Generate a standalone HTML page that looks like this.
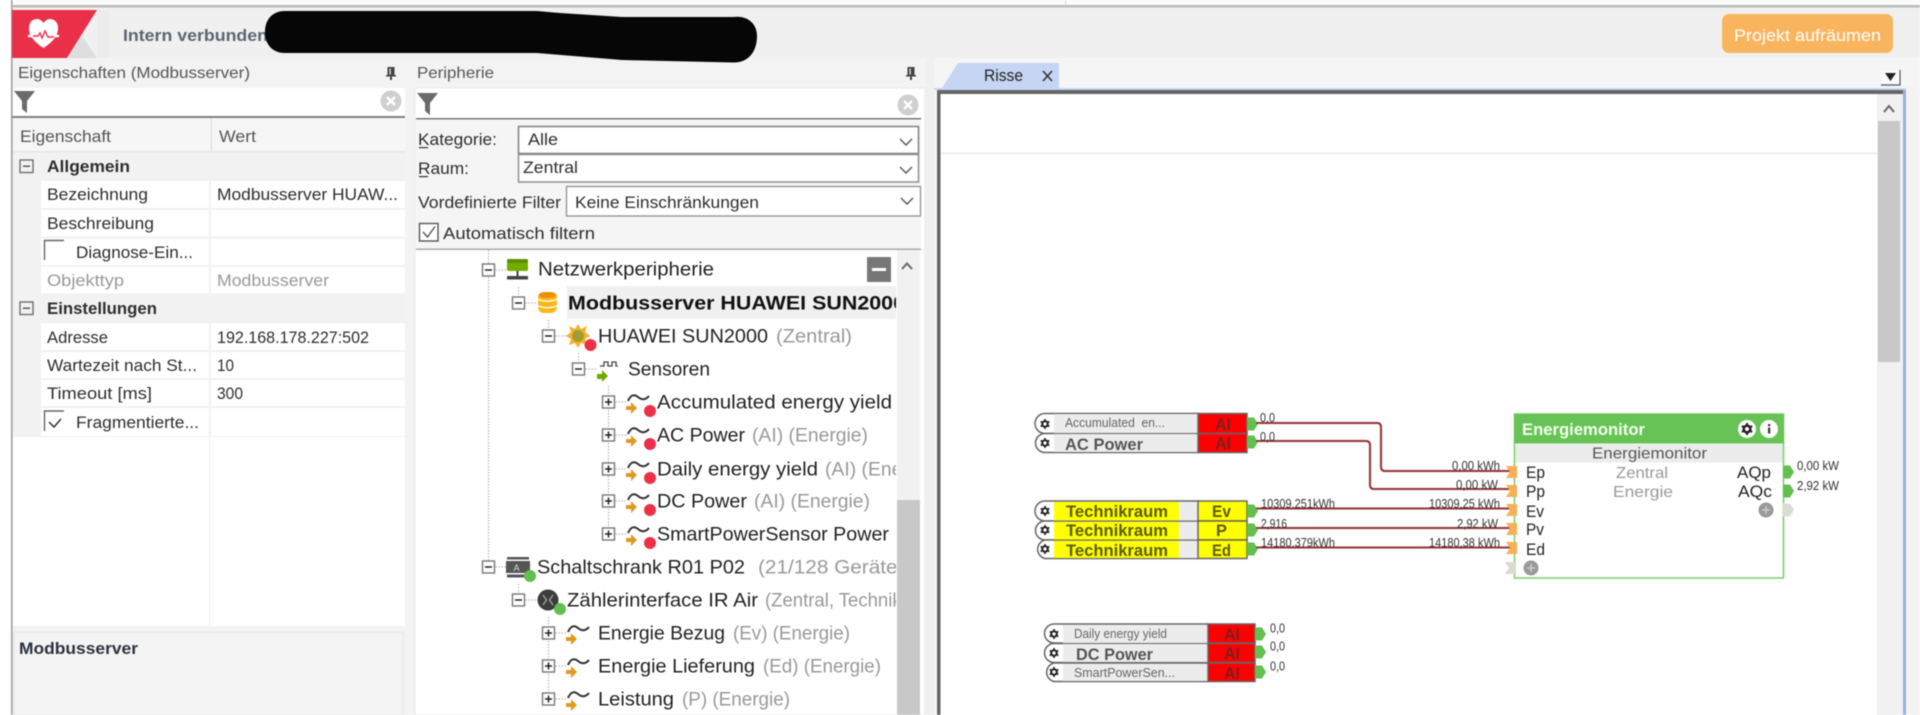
<!DOCTYPE html>
<html lang="de"><head><meta charset="utf-8"><title>Loxone Config</title>
<style>
html,body{margin:0;padding:0;background:#fff;width:1920px;height:715px;overflow:hidden}
svg{display:block;filter:blur(.45px)}
text{font-family:"Liberation Sans",sans-serif;white-space:pre}
.s{font-size:17px;fill:#2e2e2e}
.b{font-size:17px;fill:#2e2e2e;font-weight:700}
.h{font-size:16px;fill:#555}
.g{font-size:17px;fill:#999}
.t{font-size:19.5px;fill:#222}
.tg{font-size:19.5px;fill:#999}
.c{font-size:12.5px;fill:#333}
.n{font-size:12.5px;fill:#666}
.nb{font-size:17px;fill:#555;font-weight:700}
.y{font-size:17px;fill:#5c5c00;font-weight:700}
.ai{font-size:17px;fill:#7a2020;font-weight:700}
.io{font-size:17px;fill:#222}
.gc{font-size:16px;fill:#999}
</style></head><body>
<svg xmlns="http://www.w3.org/2000/svg" width="1920" height="715" viewBox="0 0 1920 715">
<defs>
<clipPath id="tc"><rect x="416" y="250" width="480" height="465"/></clipPath>
<g id="exm"><rect x="-6" y="-6" width="12" height="12" fill="#fff" stroke="#777" stroke-width="1.4"/><path d="M-3.5 0H3.5" stroke="#222" stroke-width="1.5"/><path d="M7 0H18" stroke="#aaa" stroke-dasharray="1.5 1.5"/></g>
<g id="exp"><rect x="-6" y="-6" width="12" height="12" fill="#fff" stroke="#777" stroke-width="1.4"/><path d="M-3.5 0H3.5M0 -3.5V3.5" stroke="#222" stroke-width="1.5"/><path d="M7 0H18" stroke="#aaa" stroke-dasharray="1.5 1.5"/></g>
<g id="sen"><path d="M2 -1Q6 -10 12 -5T23 -6" fill="none" stroke="#333" stroke-width="2"/><path d="M0 4H5V0L11 6L5 12V8H0Z" fill="#e09a20"/></g>
<g id="gear"><circle r="9" fill="#fff"/><circle r="4.6" fill="#222"/><circle r="2" fill="#fff"/><path d="M0 -6V6M-5.2 -3L5.2 3M-5.2 3L5.2 -3" stroke="#222" stroke-width="2"/><circle r="2" fill="#fff"/></g>
<g id="gs"><circle r="6" fill="#fff"/><circle r="3.8" fill="#222"/><path d="M0 -5V5M-4.3 -2.5L4.3 2.5M-4.3 2.5L4.3 -2.5" stroke="#222" stroke-width="1.6"/><circle r="1.7" fill="#fff"/></g>
<path id="po" d="M0 -6.500H7L11 0L7 6.500H0Z" fill="#62bf50"/>
<path id="pi" d="M-10 -6H1V6H-10L-6 0Z" fill="#f8b057"/>
<path id="ch" d="M-6 -3L0 3L6 -3" fill="none" stroke="#555" stroke-width="1.4"/>
<path id="fun" d="M0 0H21L13 10V22L8 18V10Z" fill="#6b6b6b"/>
<path id="pin" d="M-3.5 -6H3.5V2H5V3.5H1V7H-1V3.5H-5V2H-3.5Z M-1.5 -4.5V1.5H-.3V-4.5Z" fill="#444" fill-rule="evenodd"/>
</defs>

<rect width="1920" height="715" fill="#f3f3f3"/>
<!-- top -->
<rect x="0" y="0" width="12" height="715" fill="#fff"/>
<rect x="11" y="0" width="1.6" height="715" fill="#a0a0a0"/>
<rect x="13" y="0" width="1907" height="5" fill="#fbfbfb"/>
<rect x="13" y="5" width="1907" height="2.5" fill="#b9b9b9"/>
<rect x="13" y="8" width="1907" height="50" fill="#f0f0f0"/>
<rect x="1065" y="0" width="1" height="5" fill="#ddd"/>
<!-- logo -->
<rect x="97" y="10" width="12" height="48" fill="#ececec"/>
<path d="M12 10H97L67 58H12Z" fill="#ea3049"/>
<path d="M82 36L97 58H67Z" fill="#dedede"/>
<path d="M43.500 48C36 43 29 37 29 28C29 22 33 19 37 19C40 19 42 21 43.500 23C45 21 47 19 50 19C54 19 58 22 58 28C58 37 51 43 43.500 48Z" fill="#fff"/>
<path d="M28 36H36L39 34L42 39L45 31L48 37L50 36H59" fill="none" stroke="#fff" stroke-width="2.6"/>
<path d="M33 36H38L40 33L42 38L45 31L48 37H54" fill="none" stroke="#ea3049" stroke-width="1.4"/>
<text x="123" y="41" style="font-size:17px;font-weight:700;fill:#5d6570" textLength="145" lengthAdjust="spacingAndGlyphs">Intern verbunden</text>
<path d="M285 11H537L560 13L622 17H733C748 15 757 24 757 36C757 52 748 63 733 62.500L622 60L537 53H285C272 53 265 44 265 32C265 20 272 11 285 11Z" fill="#060606"/>
<rect x="1722" y="14" width="171" height="39" rx="7" fill="#f9b55e"/>
<text x="1734" y="41" style="font-size:17px;fill:#fff" textLength="147" lengthAdjust="spacingAndGlyphs">Projekt aufräumen</text>

<!-- panel 1 -->
<text x="18" y="78" class="h" textLength="232" lengthAdjust="spacingAndGlyphs">Eigenschaften (Modbusserver)</text>
<use href="#pin" x="391" y="73"/>
<rect x="13" y="88" width="392" height="28.500" fill="#fff"/>
<use href="#fun" x="14" y="91"/>
<circle cx="391" cy="101" r="10.500" fill="#cfcfcf"/><path d="M387 97L395 105M395 97L387 105" stroke="#fff" stroke-width="2.500"/>
<rect x="12" y="116" width="393" height="2" fill="#7f7f7f"/>
<rect x="13" y="118" width="392" height="34" fill="#f6f6f6"/>
<rect x="210.500" y="118" width="1.500" height="34" fill="#e2e2e2"/>
<rect x="13" y="151" width="392" height="1.500" fill="#e6e6e6"/>
<text x="20" y="142" class="h" style="font-size:17px" textLength="91" lengthAdjust="spacingAndGlyphs">Eigenschaft</text>
<text x="219" y="142" class="h" style="font-size:17px" textLength="37" lengthAdjust="spacingAndGlyphs">Wert</text>
<rect x="13" y="152.500" width="392" height="285" fill="#f2f2f2"/>
<!-- rows -->
<g fill="#fff">
<rect x="41" y="181" width="168" height="27"/><rect x="211" y="181" width="194" height="27"/>
<rect x="41" y="210" width="168" height="26.500"/><rect x="211" y="210" width="194" height="26.500"/>
<rect x="41" y="238.500" width="168" height="26.500"/><rect x="211" y="238.500" width="194" height="26.500"/>
<rect x="41" y="267" width="168" height="26.500"/><rect x="211" y="267" width="194" height="26.500"/>
<rect x="41" y="323" width="168" height="27"/><rect x="211" y="323" width="194" height="27"/>
<rect x="41" y="352" width="168" height="26"/><rect x="211" y="352" width="194" height="26"/>
<rect x="41" y="380" width="168" height="26"/><rect x="211" y="380" width="194" height="26"/>
<rect x="41" y="408" width="168" height="28"/><rect x="211" y="408" width="194" height="28"/>
<rect x="13" y="437" width="392" height="189"/>
</g>
<rect x="209" y="437" width="1" height="189" fill="#f0f0f0"/>
<rect x="20" y="160" width="13" height="12.500" fill="none" stroke="#666" stroke-width="1.300"/><path d="M23 166.200H30" stroke="#444" stroke-width="1.300"/>
<rect x="20" y="302" width="13" height="12.500" fill="none" stroke="#666" stroke-width="1.300"/><path d="M23 308.200H30" stroke="#444" stroke-width="1.300"/>
<text x="47" y="172" class="b" textLength="83" lengthAdjust="spacingAndGlyphs">Allgemein</text>
<text x="47" y="314" class="b" textLength="110" lengthAdjust="spacingAndGlyphs">Einstellungen</text>
<text x="47" y="200" class="s" textLength="101" lengthAdjust="spacingAndGlyphs">Bezeichnung</text>
<text x="217" y="200" class="s" textLength="181" lengthAdjust="spacingAndGlyphs">Modbusserver HUAW...</text>
<text x="47" y="229" class="s" textLength="107" lengthAdjust="spacingAndGlyphs">Beschreibung</text>
<path d="M44.500 260V240.500H64" fill="none" stroke="#666" stroke-width="1.400"/>
<text x="76" y="258" class="s" textLength="117" lengthAdjust="spacingAndGlyphs">Diagnose-Ein...</text>
<text x="47" y="286" class="g" textLength="77" lengthAdjust="spacingAndGlyphs">Objekttyp</text>
<text x="217" y="286" class="g" textLength="112" lengthAdjust="spacingAndGlyphs">Modbusserver</text>
<text x="47" y="343" class="s" textLength="61" lengthAdjust="spacingAndGlyphs">Adresse</text>
<text x="217" y="343" class="s" textLength="152" lengthAdjust="spacingAndGlyphs">192.168.178.227:502</text>
<text x="47" y="371" class="s" textLength="150" lengthAdjust="spacingAndGlyphs">Wartezeit nach St...</text>
<text x="217" y="371" class="s" textLength="17" lengthAdjust="spacingAndGlyphs">10</text>
<text x="47" y="399" class="s" textLength="105" lengthAdjust="spacingAndGlyphs">Timeout [ms]</text>
<text x="217" y="399" class="s" textLength="26" lengthAdjust="spacingAndGlyphs">300</text>
<path d="M44.500 431V411H64" fill="none" stroke="#666" stroke-width="1.400"/>
<path d="M49 422L54 427L61 419" fill="none" stroke="#333" stroke-width="1.500"/>
<text x="76" y="428" class="s" textLength="123" lengthAdjust="spacingAndGlyphs">Fragmentierte...</text>
<rect x="14" y="632" width="389" height="83" fill="#f4f4f4" stroke="#e8e8e8" stroke-width="1.500"/>
<text x="19" y="654" class="b" style="fill:#2b3340" textLength="119" lengthAdjust="spacingAndGlyphs">Modbusserver</text>

<!-- panel 2 -->
<text x="417" y="78" class="h" textLength="77" lengthAdjust="spacingAndGlyphs">Peripherie</text>
<use href="#pin" x="911" y="73"/>
<rect x="415" y="88" width="510" height="627" fill="#fff" stroke="#e9e9e9"/>
<use href="#fun" x="417" y="93"/>
<circle cx="908" cy="105" r="10.500" fill="#cfcfcf"/><path d="M904 101L912 109M912 101L904 109" stroke="#fff" stroke-width="2.500"/>
<rect x="416" y="118" width="505" height="1.500" fill="#777"/>
<rect x="416" y="120" width="505" height="129" fill="#f5f5f5"/>
<text x="418" y="145" class="s" textLength="79" lengthAdjust="spacingAndGlyphs">Kategorie:</text><rect x="419" y="147" width="9" height="1.200" fill="#333"/>
<text x="418" y="174" class="s" textLength="51" lengthAdjust="spacingAndGlyphs">Raum:</text><rect x="419" y="176" width="9" height="1.200" fill="#333"/>
<rect x="518.500" y="126.500" width="400" height="27" fill="#fff" stroke="#808080" stroke-width="1.500"/>
<rect x="518.500" y="154.500" width="400" height="27.500" fill="#fff" stroke="#909090" stroke-width="1.500"/>
<text x="528" y="145" class="s" textLength="30" lengthAdjust="spacingAndGlyphs">Alle</text>
<text x="523" y="173" class="s" textLength="55" lengthAdjust="spacingAndGlyphs">Zentral</text>
<use href="#ch" x="906" y="142"/><use href="#ch" x="906" y="170"/>
<text x="418" y="208" class="s" textLength="143" lengthAdjust="spacingAndGlyphs">Vordefinierte Filter</text>
<rect x="566.500" y="186.500" width="354" height="29.500" fill="#fff" stroke="#909090" stroke-width="1.300"/>
<text x="575" y="208" class="s" textLength="184" lengthAdjust="spacingAndGlyphs">Keine Einschränkungen</text>
<use href="#ch" x="907" y="201"/>
<rect x="419.500" y="223.500" width="18.500" height="17.500" fill="#fff" stroke="#555" stroke-width="1.400"/>
<path d="M423 232L427.500 237L435 226.500" fill="none" stroke="#555" stroke-width="1.400"/>
<text x="443" y="239" class="s" textLength="152" lengthAdjust="spacingAndGlyphs">Automatisch filtern</text>
<rect x="416" y="248.500" width="505" height="1.500" fill="#aaa"/>

<!-- tree -->
<rect x="897" y="250" width="23" height="465" fill="#f1f1f1"/>
<rect x="897" y="500" width="23" height="215" fill="#c8c8c8"/>
<path d="M902 269L907 263.500L912 269" fill="none" stroke="#666" stroke-width="2"/>
<rect x="867" y="257" width="24" height="25" rx="1" fill="#777"/><rect x="872" y="268" width="14" height="3" fill="#fff"/>
<rect x="567" y="286" width="329" height="33" fill="#f0f0f0"/>
<g stroke="#aaa" stroke-dasharray="1.500 1.500" fill="none">
<path d="M488.500 250V562"/><path d="M518.500 287V298"/><path d="M548.500 320V331"/><path d="M578.500 353V364"/>
<path d="M608.500 386V530"/><path d="M518.500 584V595"/><path d="M548.500 617V695"/>
</g>
<use href="#exm" x="488.500" y="270"/>
<rect x="507" y="259" width="21" height="12" rx="2" fill="#74ac00"/><rect x="507" y="259" width="21" height="4" rx="1.500" fill="#5f8f00"/><path d="M517.500 271V276" stroke="#444" stroke-width="2"/><rect x="507" y="276" width="21" height="3.500" fill="#444"/>
<text x="538" y="275.500" class="t" textLength="176" lengthAdjust="spacingAndGlyphs">Netzwerkperipherie</text>
<use href="#exm" x="518.500" y="303"/>
<rect x="538" y="292" width="19" height="21" rx="6" fill="#f9b818"/><path d="M538 299.500Q547.500 303 557 299.500M538 306Q547.500 309.500 557 306" stroke="#fff" fill="none" stroke-width="1.200"/><ellipse cx="547.500" cy="295" rx="9" ry="3" fill="#ef8d00"/>
<text clip-path="url(#tc)" x="568" y="309.500" class="t" style="font-weight:700;fill:#111" textLength="337" lengthAdjust="spacingAndGlyphs">Modbusserver HUAWEI SUN2000</text>
<use href="#exm" x="548.500" y="336"/>
<path d="M578 324L581 329L587 326L585 332L590 336L585 339L587 345L581 343L578 348L575 343L569 345L571 339L566 336L571 332L569 326L575 329Z" fill="#f9b030"/><circle cx="578" cy="336" r="6" fill="#8a9a30" opacity=".8"/>
<circle cx="590.500" cy="345" r="6" fill="#ec3048"/>
<text x="598" y="342.500" class="t" textLength="170" lengthAdjust="spacingAndGlyphs">HUAWEI SUN2000</text>
<text x="776" y="342.500" class="tg" textLength="76" lengthAdjust="spacingAndGlyphs">(Zentral)</text>
<use href="#exm" x="578.500" y="369"/>
<path d="M600 366H604V362H608V366H612V362H616V366H618" fill="none" stroke="#444" stroke-width="1.300"/><path d="M597 374H602V370L608 376L602 382V379H597Z" fill="#6fa800"/>
<text x="628" y="375.500" class="t" textLength="82" lengthAdjust="spacingAndGlyphs">Sensoren</text>

<use href="#exp" x="608.500" y="402"/><use href="#sen" x="626" y="402"/><circle cx="650" cy="411" r="6" fill="#ec3048"/>
<text clip-path="url(#tc)" x="657" y="408.500" class="t" textLength="235" lengthAdjust="spacingAndGlyphs">Accumulated energy yield</text>
<use href="#exp" x="608.500" y="435"/><use href="#sen" x="626" y="435"/><circle cx="650" cy="444" r="6" fill="#ec3048"/>
<text x="657" y="441.500" class="t" textLength="88" lengthAdjust="spacingAndGlyphs">AC Power</text><text x="752" y="441.500" class="tg" textLength="116" lengthAdjust="spacingAndGlyphs">(AI) (Energie)</text>
<use href="#exp" x="608.500" y="469"/><use href="#sen" x="626" y="469"/><circle cx="650" cy="478" r="6" fill="#ec3048"/>
<text x="657" y="475.500" class="t" textLength="161" lengthAdjust="spacingAndGlyphs">Daily energy yield</text><text clip-path="url(#tc)" x="825" y="475.500" class="tg" textLength="116" lengthAdjust="spacingAndGlyphs">(AI) (Energie)</text>
<use href="#exp" x="608.500" y="501"/><use href="#sen" x="626" y="501"/><circle cx="650" cy="510" r="6" fill="#ec3048"/>
<text x="657" y="507.500" class="t" textLength="90" lengthAdjust="spacingAndGlyphs">DC Power</text><text x="754" y="507.500" class="tg" textLength="116" lengthAdjust="spacingAndGlyphs">(AI) (Energie)</text>
<use href="#exp" x="608.500" y="534"/><use href="#sen" x="626" y="534"/><circle cx="650" cy="543" r="6" fill="#ec3048"/>
<text x="657" y="540.500" class="t" textLength="232" lengthAdjust="spacingAndGlyphs">SmartPowerSensor Power</text>

<use href="#exm" x="488.500" y="567"/>
<rect x="507" y="557" width="22" height="2.500" fill="#555"/><rect x="506" y="561" width="24" height="12" fill="#555"/><rect x="507" y="574.500" width="22" height="3" fill="#555"/><text x="513.500" y="571" style="font-size:9px;fill:#ddd">A</text>
<circle cx="530" cy="576" r="6" fill="#62bf50"/>
<text x="537" y="573.500" class="t" textLength="208" lengthAdjust="spacingAndGlyphs">Schaltschrank R01 P02</text>
<text clip-path="url(#tc)" x="758" y="573.500" class="tg" textLength="158" lengthAdjust="spacingAndGlyphs">(21/128 Geräten)</text>
<use href="#exm" x="518.500" y="600"/>
<circle cx="548" cy="600" r="10.500" fill="#3c3c3c"/><path d="M543 595L546.500 600L543 605M553 595L549.500 600L553 605" fill="none" stroke="#aaa" stroke-width="1.200"/>
<circle cx="560" cy="609" r="6" fill="#62bf50"/>
<text x="567" y="606.500" class="t" textLength="191" lengthAdjust="spacingAndGlyphs">Zählerinterface IR Air</text>
<text clip-path="url(#tc)" x="765" y="606.500" class="tg" textLength="185" lengthAdjust="spacingAndGlyphs">(Zentral, Technikraum)</text>
<use href="#exp" x="548.500" y="633"/><use href="#sen" x="566" y="633"/>
<text x="598" y="639.500" class="t" textLength="127" lengthAdjust="spacingAndGlyphs">Energie Bezug</text><text x="733" y="639.500" class="tg" textLength="117" lengthAdjust="spacingAndGlyphs">(Ev) (Energie)</text>
<use href="#exp" x="548.500" y="666"/><use href="#sen" x="566" y="666"/>
<text x="598" y="672.500" class="t" textLength="157" lengthAdjust="spacingAndGlyphs">Energie Lieferung</text><text x="763" y="672.500" class="tg" textLength="118" lengthAdjust="spacingAndGlyphs">(Ed) (Energie)</text>
<use href="#exp" x="548.500" y="699"/><use href="#sen" x="566" y="699"/>
<text x="598" y="705.500" class="t" textLength="76" lengthAdjust="spacingAndGlyphs">Leistung</text><text x="682" y="705.500" class="tg" textLength="108" lengthAdjust="spacingAndGlyphs">(P) (Energie)</text>

<!-- right pane -->
<rect x="926" y="58" width="8" height="657" fill="#f0f0f0"/>
<rect x="934" y="58" width="986" height="30" fill="#f5f5f5"/>
<path d="M942 88L958 63H1059V88Z" fill="#c6d5f3"/>
<text x="984" y="81" style="font-size:16.500px;fill:#222" textLength="39" lengthAdjust="spacingAndGlyphs">Risse</text>
<path d="M1043 71L1052 81M1052 71L1043 81" stroke="#333" stroke-width="1.600"/>
<rect x="1881" y="70" width="19" height="15" fill="#fafafa"/><path d="M1881 85H1900V70" fill="none" stroke="#555" stroke-width="1.200"/><path d="M1885 73H1896L1890.500 81Z" fill="#222"/>
<rect x="934" y="88" width="972" height="2" fill="#c6d5f3"/>
<rect x="936" y="90" width="970" height="625" fill="#fff"/>
<rect x="937" y="90" width="966" height="4" fill="#666"/>
<rect x="937" y="90" width="3.500" height="625" fill="#666"/>
<rect x="1903" y="90" width="3" height="625" fill="#9db0d8"/>
<rect x="941" y="152.500" width="936" height="1.500" fill="#e8e8e8"/>
<rect x="1877" y="94" width="26" height="621" fill="#f1f1f1"/>
<rect x="1878" y="121" width="22" height="241" fill="#c8c8c8"/>
<path d="M1884 112L1889 106L1894 112" fill="none" stroke="#666" stroke-width="2"/>

<!-- block 1 -->
<g>
<path d="M1198 413.500H1045A10 10 0 0 0 1045 433.500H1198Z" fill="#fff" stroke="#666" stroke-width="1.500"/>
<path d="M1198 433.500H1045A9.500 9.500 0 0 0 1045 452.500H1198Z" fill="#fff" stroke="#666" stroke-width="1.500"/>
<rect x="1054" y="414" width="144" height="19" fill="#ececec"/><rect x="1054" y="434" width="144" height="18" fill="#ececec"/>
<rect x="1198" y="413.500" width="49" height="20" fill="#f00" stroke="#666" stroke-width="1.500"/>
<rect x="1198" y="433.500" width="49" height="19" fill="#f00" stroke="#666" stroke-width="1.500"/>
<use href="#gs" x="1045" y="424"/><use href="#gs" x="1045" y="443"/>
<text x="1065" y="427" class="n" textLength="100" lengthAdjust="spacingAndGlyphs">Accumulated  en...</text>
<text x="1065" y="450" class="nb" textLength="78" lengthAdjust="spacingAndGlyphs">AC Power</text>
<text x="1215" y="430" class="ai" textLength="16" lengthAdjust="spacingAndGlyphs">AI</text>
<text x="1215" y="449" class="ai" textLength="16" lengthAdjust="spacingAndGlyphs">AI</text>
<use href="#po" x="1247" y="424"/><use href="#po" x="1247" y="442"/>
</g>
<!-- block 2 -->
<g>
<path d="M1198 501H1045A10 10 0 0 0 1045 521H1198Z" fill="#fff" stroke="#666" stroke-width="1.500"/>
<path d="M1198 521H1045A9.500 9.500 0 0 0 1045 540H1198Z" fill="#fff" stroke="#666" stroke-width="1.500"/>
<path d="M1198 540H1045A9.500 9.500 0 0 0 1045 558.500H1198Z" fill="#fff" stroke="#666" stroke-width="1.500"/>
<rect x="1054" y="502" width="125" height="18.500" fill="#ff0"/><rect x="1054" y="522" width="125" height="17.500" fill="#ff0"/><rect x="1054" y="541" width="125" height="17" fill="#ff0"/>
<rect x="1179" y="502" width="19" height="18.500" fill="#ececec"/><rect x="1179" y="522" width="19" height="17.500" fill="#ececec"/><rect x="1179" y="541" width="19" height="17" fill="#ececec"/>
<rect x="1198" y="501" width="49" height="20" fill="#ff0" stroke="#666" stroke-width="1.500"/>
<rect x="1198" y="521" width="49" height="19" fill="#ff0" stroke="#666" stroke-width="1.500"/>
<rect x="1198" y="540" width="49" height="18.500" fill="#ff0" stroke="#666" stroke-width="1.500"/>
<use href="#gs" x="1045" y="511"/><use href="#gs" x="1045" y="530"/><use href="#gs" x="1045" y="549"/>
<text x="1066" y="517" class="y" textLength="102" lengthAdjust="spacingAndGlyphs">Technikraum</text>
<text x="1066" y="536" class="y" textLength="102" lengthAdjust="spacingAndGlyphs">Technikraum</text>
<text x="1066" y="556" class="y" textLength="102" lengthAdjust="spacingAndGlyphs">Technikraum</text>
<text x="1212" y="517" class="y" textLength="19" lengthAdjust="spacingAndGlyphs">Ev</text>
<text x="1216" y="536" class="y" textLength="11" lengthAdjust="spacingAndGlyphs">P</text>
<text x="1212" y="556" class="y" textLength="19" lengthAdjust="spacingAndGlyphs">Ed</text>
<use href="#po" x="1247" y="511"/><use href="#po" x="1247" y="530"/><use href="#po" x="1247" y="549"/>
</g>
<!-- wires -->
<g fill="none" stroke-linejoin="round">
<g stroke="#d8b0b0" stroke-width="2.600">
<path d="M1256 423H1377Q1381 423 1381 427V467Q1381 471 1385 471H1510"/>
<path d="M1256 441H1366Q1370 441 1370 445V485Q1370 489 1374 489H1510"/>
<path d="M1256 508.500H1510M1256 528H1510M1256 547.500H1510"/>
</g>
<g stroke="#8a1f1f" stroke-width="1.500">
<path d="M1256 423H1377Q1381 423 1381 427V467Q1381 471 1385 471H1510"/>
<path d="M1256 441H1366Q1370 441 1370 445V485Q1370 489 1374 489H1510"/>
<path d="M1256 508.500H1510M1256 528H1510M1256 547.500H1510"/>
</g>
</g>
<text x="1260" y="422" class="c" textLength="15" lengthAdjust="spacingAndGlyphs">0,0</text>
<text x="1260" y="441" class="c" textLength="15" lengthAdjust="spacingAndGlyphs">0,0</text>
<text x="1452" y="470" class="c" textLength="48" lengthAdjust="spacingAndGlyphs">0,00 kWh</text>
<text x="1456" y="489" class="c" textLength="42" lengthAdjust="spacingAndGlyphs">0,00 kW</text>
<text x="1261" y="508" class="c" textLength="74" lengthAdjust="spacingAndGlyphs">10309.251kWh</text>
<text x="1261" y="528" class="c" textLength="26" lengthAdjust="spacingAndGlyphs">2,916</text>
<text x="1261" y="547" class="c" textLength="74" lengthAdjust="spacingAndGlyphs">14180.379kWh</text>
<text x="1429" y="508" class="c" textLength="71" lengthAdjust="spacingAndGlyphs">10309,25 kWh</text>
<text x="1457" y="528" class="c" textLength="41" lengthAdjust="spacingAndGlyphs">2,92 kW</text>
<text x="1429" y="547" class="c" textLength="71" lengthAdjust="spacingAndGlyphs">14180,38 kWh</text>

<!-- energiemonitor -->
<rect x="1514.500" y="414" width="269" height="164" fill="#fff" stroke="#7ccb6c" stroke-width="1.500"/>
<rect x="1514" y="414" width="270" height="29.500" fill="#67c355"/>
<rect x="1515.500" y="444" width="267" height="18.500" fill="#ececec"/>
<text x="1522" y="435" style="font-size:16.500px;font-weight:700;fill:#f4fff0" textLength="123" lengthAdjust="spacingAndGlyphs">Energiemonitor</text>
<use href="#gear" x="1747" y="429"/>
<circle cx="1769" cy="429" r="9" fill="#fff"/><rect x="1768" y="427.500" width="2.200" height="6" fill="#333"/><rect x="1768" y="424" width="2.200" height="2.200" fill="#333"/>
<text x="1592" y="458.500" style="font-size:16px;fill:#555" textLength="115" lengthAdjust="spacingAndGlyphs">Energiemonitor</text>
<use href="#pi" x="1516" y="472"/><use href="#pi" x="1516" y="491"/><use href="#pi" x="1516" y="510"/><use href="#pi" x="1516" y="529"/><use href="#pi" x="1516" y="548"/>
<path d="M1505 562H1516V574H1505L1509 568Z" fill="#dcdcd6"/>
<text x="1526" y="478" class="io" textLength="19" lengthAdjust="spacingAndGlyphs">Ep</text>
<text x="1526" y="497" class="io" textLength="19" lengthAdjust="spacingAndGlyphs">Pp</text>
<text x="1526" y="517" class="io" textLength="18" lengthAdjust="spacingAndGlyphs">Ev</text>
<text x="1526" y="535" class="io" textLength="18" lengthAdjust="spacingAndGlyphs">Pv</text>
<text x="1526" y="555" class="io" textLength="19" lengthAdjust="spacingAndGlyphs">Ed</text>
<circle cx="1531" cy="568" r="7.500" fill="#999"/><path d="M1527 568H1535M1531 564V572" stroke="#ccc" stroke-width="1.500"/>
<text x="1616" y="478" class="gc" textLength="52" lengthAdjust="spacingAndGlyphs">Zentral</text>
<text x="1613" y="497" class="gc" textLength="60" lengthAdjust="spacingAndGlyphs">Energie</text>
<text x="1737" y="478" class="io" textLength="34" lengthAdjust="spacingAndGlyphs">AQp</text>
<text x="1738" y="497" class="io" textLength="34" lengthAdjust="spacingAndGlyphs">AQc</text>
<circle cx="1766" cy="510" r="7.500" fill="#999"/><path d="M1762 510H1770M1766 506V514" stroke="#ccc" stroke-width="1.500"/>
<use href="#po" x="1783" y="472"/><use href="#po" x="1783" y="491"/>
<path d="M1783 503.500H1790L1794 510L1790 516.500H1783Z" fill="#dcdcd6"/>
<text x="1797" y="470" class="c" textLength="42" lengthAdjust="spacingAndGlyphs">0,00 kW</text>
<text x="1797" y="490" class="c" textLength="42" lengthAdjust="spacingAndGlyphs">2,92 kW</text>

<!-- block 3 -->
<g>
<path d="M1208 624H1054A9.500 9.500 0 0 0 1054 643H1208Z" fill="#fff" stroke="#666" stroke-width="1.500"/>
<path d="M1208 643.500H1054A9.500 9.500 0 0 0 1054 662.500H1208Z" fill="#fff" stroke="#666" stroke-width="1.500"/>
<path d="M1208 663H1054A9.500 9.500 0 0 0 1054 681.500H1208Z" fill="#fff" stroke="#666" stroke-width="1.500"/>
<rect x="1063" y="625" width="145" height="18" fill="#ececec"/><rect x="1063" y="644" width="145" height="18" fill="#ececec"/><rect x="1063" y="664" width="145" height="17" fill="#ececec"/>
<rect x="1208" y="624" width="47" height="19" fill="#f00" stroke="#666" stroke-width="1.500"/>
<rect x="1208" y="643.500" width="47" height="19" fill="#f00" stroke="#666" stroke-width="1.500"/>
<rect x="1208" y="663" width="47" height="18.500" fill="#f00" stroke="#666" stroke-width="1.500"/>
<use href="#gs" x="1054" y="634"/><use href="#gs" x="1054" y="653"/><use href="#gs" x="1054" y="672"/>
<text x="1074" y="638" class="n" textLength="93" lengthAdjust="spacingAndGlyphs">Daily energy yield</text>
<text x="1076" y="660" class="nb" textLength="77" lengthAdjust="spacingAndGlyphs">DC Power</text>
<text x="1074" y="677" class="n" textLength="101" lengthAdjust="spacingAndGlyphs">SmartPowerSen...</text>
<text x="1224" y="640" class="ai" textLength="16" lengthAdjust="spacingAndGlyphs">AI</text>
<text x="1224" y="659" class="ai" textLength="16" lengthAdjust="spacingAndGlyphs">AI</text>
<text x="1224" y="679" class="ai" textLength="16" lengthAdjust="spacingAndGlyphs">AI</text>
<use href="#po" x="1255" y="634"/><use href="#po" x="1255" y="652"/><use href="#po" x="1255" y="672"/>
</g>
<text x="1270" y="632.500" class="c" textLength="15" lengthAdjust="spacingAndGlyphs">0,0</text>
<text x="1270" y="650.500" class="c" textLength="15" lengthAdjust="spacingAndGlyphs">0,0</text>
<text x="1270" y="670.500" class="c" textLength="15" lengthAdjust="spacingAndGlyphs">0,0</text>
</svg>
</body></html>
